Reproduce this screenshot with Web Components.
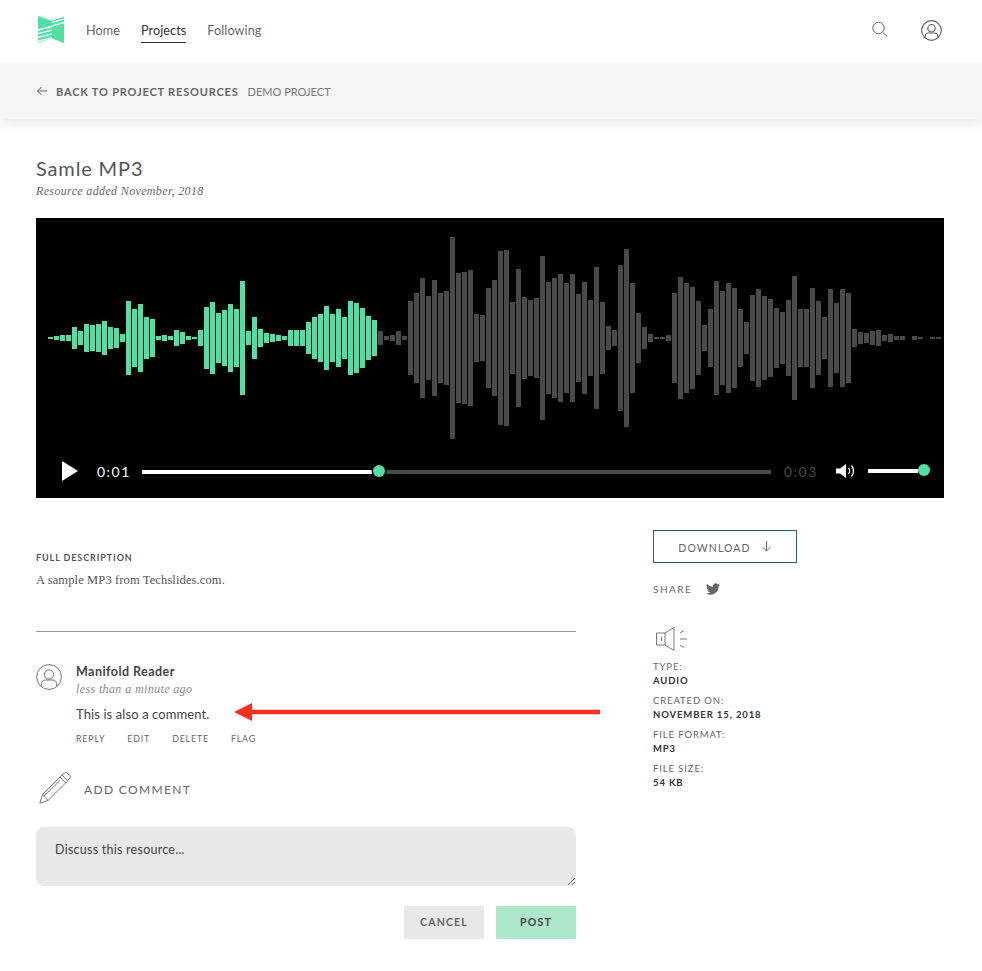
<!DOCTYPE html>
<html lang="en">
<head>
<meta charset="utf-8">
<title>Samle MP3</title>
<style>
  html,body{margin:0;background:#fff;}
  body{font-family:"Lato","Liberation Sans",sans-serif;color:#555;}
</style>
</head>
<body>
<app-header></app-header>
<back-bar></back-bar>
<resource-page>
  <audio-player slot="player"></audio-player>
  <resource-description slot="left"></resource-description>
  <comment-item slot="left"></comment-item>
  <comment-form slot="left"></comment-form>
  <resource-meta slot="right"></resource-meta>
</resource-page>
<script>
const SERIF = `"Liberation Serif",serif`;

class AppHeader extends HTMLElement{
  constructor(){
    super();
    this.attachShadow({mode:'open'}).innerHTML=`
    <style>
      :host{display:flex;align-items:center;height:63px;padding:0 40px 0 38px;background:#fff;position:relative;z-index:1;box-sizing:border-box;}
      .logo{display:block;width:26px;height:28px;margin-right:22px;margin-bottom:3px;}
      nav{display:flex;gap:21px;font-size:12.6px;letter-spacing:.1px;line-height:20px;margin-top:1px;}
      nav a{color:#666;padding:0 0 1px;border-bottom:1px solid transparent;}
      nav a.on{color:#333;border-bottom:1.5px solid #333;}
      .right{margin-left:auto;display:flex;gap:32px;align-items:center;margin-bottom:3px;}
      svg{display:block;}
    </style>
    <svg class="logo" viewBox="0 0 26 28">
      <polygon points="0,0 13.700,4.700 26,.7 26,27.300 13.700,22.300 0,26.700" fill="#52dfa6"/>
      <g stroke="#fff" stroke-width="1.300" fill="none">
        <path d="M0 14L14 10.500M0 17.700L14 14.200M0 21.400L14 17.900M0 25.100L14 21.600"/>
        <path d="M13.700 6.700L26 3M13.700 10.200L26 6.500"/>
      </g>
    </svg>
    <nav><a>Home</a><a class="on">Projects</a><a>Following</a></nav>
    <div class="right">
      <svg width="18" height="18" viewBox="0 0 18 18" fill="none" stroke="#666" stroke-width="1"><circle cx="7.500" cy="7" r="5.700"/><path d="M11.600 11.200L16.200 15.600"/></svg>
      <svg width="21" height="21" viewBox="0 0 21 21" fill="none" stroke="#666" stroke-width="1.200"><circle cx="10.500" cy="10.500" r="9.800"/><circle cx="10.500" cy="8.200" r="3.700"/><path d="M4.300 17.600v-1.600c0-1.800 1.500-3 3.200-3h6c1.700 0 3.200 1.200 3.200 3v1.600"/></svg>
    </div>`;
  }
}

class BackBar extends HTMLElement{
  constructor(){
    super();
    this.attachShadow({mode:'open'}).innerHTML=`
    <style>
      :host{display:flex;align-items:center;height:56px;padding:0 36px;background:#f5f5f5;box-shadow:0 4px 12px rgba(0,0,0,.1);position:relative;box-sizing:border-box;font-size:11px;text-transform:uppercase;letter-spacing:.82px;}
      svg{display:block;margin-right:8px;}
      b{font-weight:700;color:#666;margin-right:9px;}
      span{color:#777;letter-spacing:0;}
    </style>
    <svg width="12" height="10" viewBox="0 0 12 10" fill="none" stroke="#666" stroke-width="1"><path d="M11 5H1.500M5.500 1L1.500 5l4 4"/></svg>
    <b>Back to project resources</b><span>Demo Project</span>`;
  }
}

class ResourcePage extends HTMLElement{
  constructor(){
    super();
    this.attachShadow({mode:'open'}).innerHTML=`
    <style>
      :host{display:block;padding:36px 38px 32px 36px;position:relative;}
      h1{margin:0;font-size:20px;font-weight:400;line-height:27px;color:#555;letter-spacing:.85px;}
      .added{font:italic 12px/18px ${SERIF};color:#666;letter-spacing:.35px;margin-bottom:18px;}
      .cols{display:flex;gap:77px;margin-top:32px;}
      .left{width:540px;}
      .arrow{position:absolute;left:234px;top:584px;display:block;}
    </style>
    <h1>Samle MP3</h1>
    <div class="added">Resource added November, 2018</div>
    <slot name="player"></slot>
    <div class="cols">
      <div class="left"><slot name="left"></slot></div>
      <div><slot name="right"></slot></div>
    </div>
    <svg class="arrow" width="366" height="18" viewBox="0 0 366 18"><path d="M366 6.700H18V0L0 9 18 18V11.300H366z" fill="#f5301e"/></svg>`;
  }
}

// half heights of the bars, read off the reference
const WAVE=[1,2,3,3,11,7,14,13,14,17,11,10,4,37,29,34,21,19,2,3,2,8,6,2,1,8,31,36,25,28,34,29,57,7,21,9,5,4,3,2,8,8,8,16,21,24,32,24,29,21,37,35,30,22,18,
7,2,3,7,2,37,45,60,42,58,45,47,101,65,66,68,24,23,50,58,87,88,36,69,41,38,40,82,56,60,64,55,64,44,56,38,71,36,12,8,73,89,55,25,11,4,1,1,3,45,61,55,51,37,13,29,57,47,55,50,29,16,43,49,42,39,30,26,38,62,29,29,50,37,21,49,35,49,45,9,6,5,7,8,3,4,2,2,0,2,1,0,1,1];

class AudioPlayer extends HTMLElement{
  constructor(){
    super();
    let bars='';
    WAVE.forEach((h,i)=>{
      if(!h)return;
      bars+=`<rect x="${12+6*i}" y="${120-h}" width="5" height="${2*h}" fill="${i<55?'#52dfa6':'#4a4a4a'}"/>`;
    });
    this.attachShadow({mode:'open'}).innerHTML=`
    <style>
      :host{display:block;width:908px;height:280px;background:#000;}
      svg{display:block;}
      .controls{display:flex;align-items:center;height:26px;padding:0 14px 0 26px;font-size:14px;letter-spacing:1.500px;}
      .time{color:#fff;margin:0 12px 0 19px;width:33px;}
      .time.end{color:#4a4a4a;margin:0 19px 0 13px;}
      .track{flex:none;height:4px;position:relative;background:#4a4a4a;}
      .track i{display:block;height:100%;background:#fff;}
      .knob{position:absolute;width:12px;height:12px;border-radius:50%;background:#52dfa6;top:-5px;}
      .progress{width:629px;margin-top:2px;}
      .progress i{width:236px;}
      .progress .knob{left:231px;box-shadow:0 0 0 1.500px #000;}
      .vol{width:50px;margin-left:12px;background:#fff;}
      .vol .knob{left:50px;}
    </style>
    <svg width="908" height="240" viewBox="0 0 908 240">${bars}</svg>
    <div class="controls">
      <svg width="16" height="20" viewBox="0 0 16 20"><path d="M0 0L16 10 0 20z" fill="#fff"/></svg>
      <span class="time">0:01</span>
      <div class="track progress"><i></i><div class="knob"></div></div>
      <span class="time end">0:03</span>
      <svg width="20" height="16" viewBox="0 0 20 16" fill="none"><path d="M0 5.500h4L10 1v14L4 10.500H0z" fill="#fff"/><path d="M12.500 5c1.400 1.600 1.400 4.400 0 6M15.500 2.500c2.600 3 2.600 8 0 11" stroke="#fff" stroke-width="1.300"/></svg>
      <div class="track vol"><div class="knob"></div></div>
    </div>`;
  }
}

class ResourceDescription extends HTMLElement{
  constructor(){
    super();
    this.attachShadow({mode:'open'}).innerHTML=`
    <style>
      :host{display:block;padding:21px 0 42px;border-bottom:1px solid #999;}
      h2{margin:0;font-size:9px;font-weight:700;line-height:14px;letter-spacing:.9px;text-transform:uppercase;color:#555;}
      p{margin:6px 0 0;font:12.500px/18px ${SERIF};color:#555;letter-spacing:.12px;}
    </style>
    <h2>Full Description</h2>
    <p>A sample MP3 from Techslides.com.</p>`;
  }
}

class CommentItem extends HTMLElement{
  constructor(){
    super();
    this.attachShadow({mode:'open'}).innerHTML=`
    <style>
      :host{display:flex;gap:14px;padding-top:32px;}
      svg{display:block;flex:none;}
      .name{font-size:12.500px;font-weight:700;line-height:16px;color:#444;letter-spacing:.45px;}
      .when{font:italic 12px/16px ${SERIF};color:#888;margin-top:1px;letter-spacing:.38px;}
      .body{font-size:13px;line-height:18px;color:#444;margin-top:8px;letter-spacing:.1px;}
      .actions{display:flex;gap:22px;margin-top:9px;font-size:8.800px;line-height:14px;letter-spacing:.85px;text-transform:uppercase;color:#666;}
    </style>
    <svg width="26" height="26" viewBox="0 0 26 26" fill="none" stroke="#777" stroke-width="1"><circle cx="13" cy="13" r="12.400"/><circle cx="13" cy="10.500" r="4.600"/><path d="M5.500 22v-2.500c0-2 1.700-3.500 3.700-3.500h7.600c2 0 3.700 1.500 3.700 3.500V22"/></svg>
    <div>
      <div class="name">Manifold Reader</div>
      <div class="when">less than a minute ago</div>
      <div class="body">This is also a comment.</div>
      <div class="actions"><span>Reply</span><span>Edit</span><span>Delete</span><span>Flag</span></div>
    </div>`;
  }
}

class CommentForm extends HTMLElement{
  constructor(){
    super();
    this.attachShadow({mode:'open'}).innerHTML=`
    <style>
      :host{display:block;margin-top:26px;}
      .title{display:flex;align-items:center;height:32px;gap:13px;padding-left:3px;font-size:12px;letter-spacing:1.350px;text-transform:uppercase;color:#666;}
      .title span{padding-top:2px;}
      svg{display:block;}
      textarea{display:block;box-sizing:border-box;width:540px;height:59px;margin-top:23px;padding:14px 19px;border:0;border-radius:8px;background:#e8e8e8;font:12.500px/18px "Lato",sans-serif;color:#444;letter-spacing:.25px;}
      .btns{display:flex;justify-content:flex-end;gap:12px;margin-top:20px;}
      button{width:80px;height:33px;border:0;padding:0 0 2px;font:700 10.500px "Lato",sans-serif;letter-spacing:1.200px;text-transform:uppercase;background:#e8e8e8;color:#666;}
      button.post{background:#ace6cb;color:#444;}
    </style>
    <div class="title">
      <svg width="32" height="32" viewBox="0 0 32 32" fill="none" stroke="#777" stroke-width="1"><path d="M.8 31.200L3.500 22.500 23 3l3-2.200c.8-.5 1.600-.4 2.200.2l2.500 2.500c.6.600.7 1.500.2 2.200L28.600 9 9 28.500z"/><path d="M3.500 22.500L9 28.500M5 24L21 8.500M23 3l5.600 6M21 5l5.600 6"/></svg>
      <span>Add Comment</span>
    </div>
    <textarea>Discuss this resource...</textarea>
    <div class="btns"><button>Cancel</button><button class="post">Post</button></div>`;
  }
}

class MetaField extends HTMLElement{
  constructor(){
    super();
    this.attachShadow({mode:'open'}).innerHTML=`
    <style>
      :host{display:block;font-size:9.500px;line-height:14px;letter-spacing:.88px;text-transform:uppercase;}
      .k{color:#666;}
      .v{color:#333;font-weight:700;}
    </style>
    <div class="k">${this.getAttribute('label')}</div>
    <div class="v"><slot></slot></div>`;
  }
}

class ResourceMeta extends HTMLElement{
  constructor(){
    super();
    this.attachShadow({mode:'open'}).innerHTML=`
    <style>
      :host{display:block;width:144px;}
      .dl{display:flex;align-items:center;justify-content:center;gap:10px;box-sizing:border-box;height:33px;border:1px solid #1d6b50;font-size:10.500px;letter-spacing:1.100px;color:#666;text-transform:uppercase;}
      .dl span{padding-top:2px;}
      .share{display:flex;align-items:center;gap:14px;height:18px;margin-top:17px;font-size:10px;letter-spacing:1.500px;text-transform:uppercase;color:#666;}
      svg{display:block;}
      .type{margin-top:29px;margin-left:3px;}
      .fields{display:flex;flex-direction:column;gap:6px;margin-top:9px;}
    </style>
    <div class="dl"><span>Download</span><svg width="11" height="11" viewBox="0 0 11 11" fill="none" stroke="#666" stroke-width="1"><path d="M5.500 0v10M1.500 6l4 4 4-4"/></svg></div>
    <div class="share"><span>Share</span><svg width="14" height="14" viewBox="0 0 24 24" fill="#666"><path d="M23.953 4.570a10 10 0 01-2.825.775 4.958 4.958 0 002.163-2.723c-.951.555-2.005.959-3.127 1.184a4.920 4.920 0 00-8.384 4.482C7.690 8.095 4.067 6.130 1.640 3.162a4.822 4.822 0 00-.666 2.475c0 1.710.870 3.213 2.188 4.096a4.904 4.904 0 01-2.228-.616v.060a4.923 4.923 0 003.946 4.827 4.996 4.996 0 01-2.212.085 4.936 4.936 0 004.604 3.417 9.867 9.867 0 01-6.102 2.105c-.390 0-.779-.023-1.170-.067a13.995 13.995 0 007.557 2.209c9.053 0 13.998-7.496 13.998-13.985 0-.210 0-.420-.015-.630A9.935 9.935 0 0024 4.590z"/></svg></div>
    <svg class="type" width="32" height="24" viewBox="0 0 32 24" fill="none" stroke="#777" stroke-width="1"><path d="M18 .5L9 6H.5v12H9l9 5.500zM9 6v12"/><path d="M5.500 10v4"/><path d="M24 6l4-2.500M24 12h7M24 18l4 2.500"/></svg>
    <div class="fields">
      <meta-field label="Type:">Audio</meta-field>
      <meta-field label="Created On:">November 15, 2018</meta-field>
      <meta-field label="File Format:">MP3</meta-field>
      <meta-field label="File Size:">54 KB</meta-field>
    </div>`;
  }
}

customElements.define('app-header',AppHeader);
customElements.define('back-bar',BackBar);
customElements.define('resource-page',ResourcePage);
customElements.define('audio-player',AudioPlayer);
customElements.define('resource-description',ResourceDescription);
customElements.define('comment-item',CommentItem);
customElements.define('comment-form',CommentForm);
customElements.define('meta-field',MetaField);
customElements.define('resource-meta',ResourceMeta);
</script>
</body>
</html>
